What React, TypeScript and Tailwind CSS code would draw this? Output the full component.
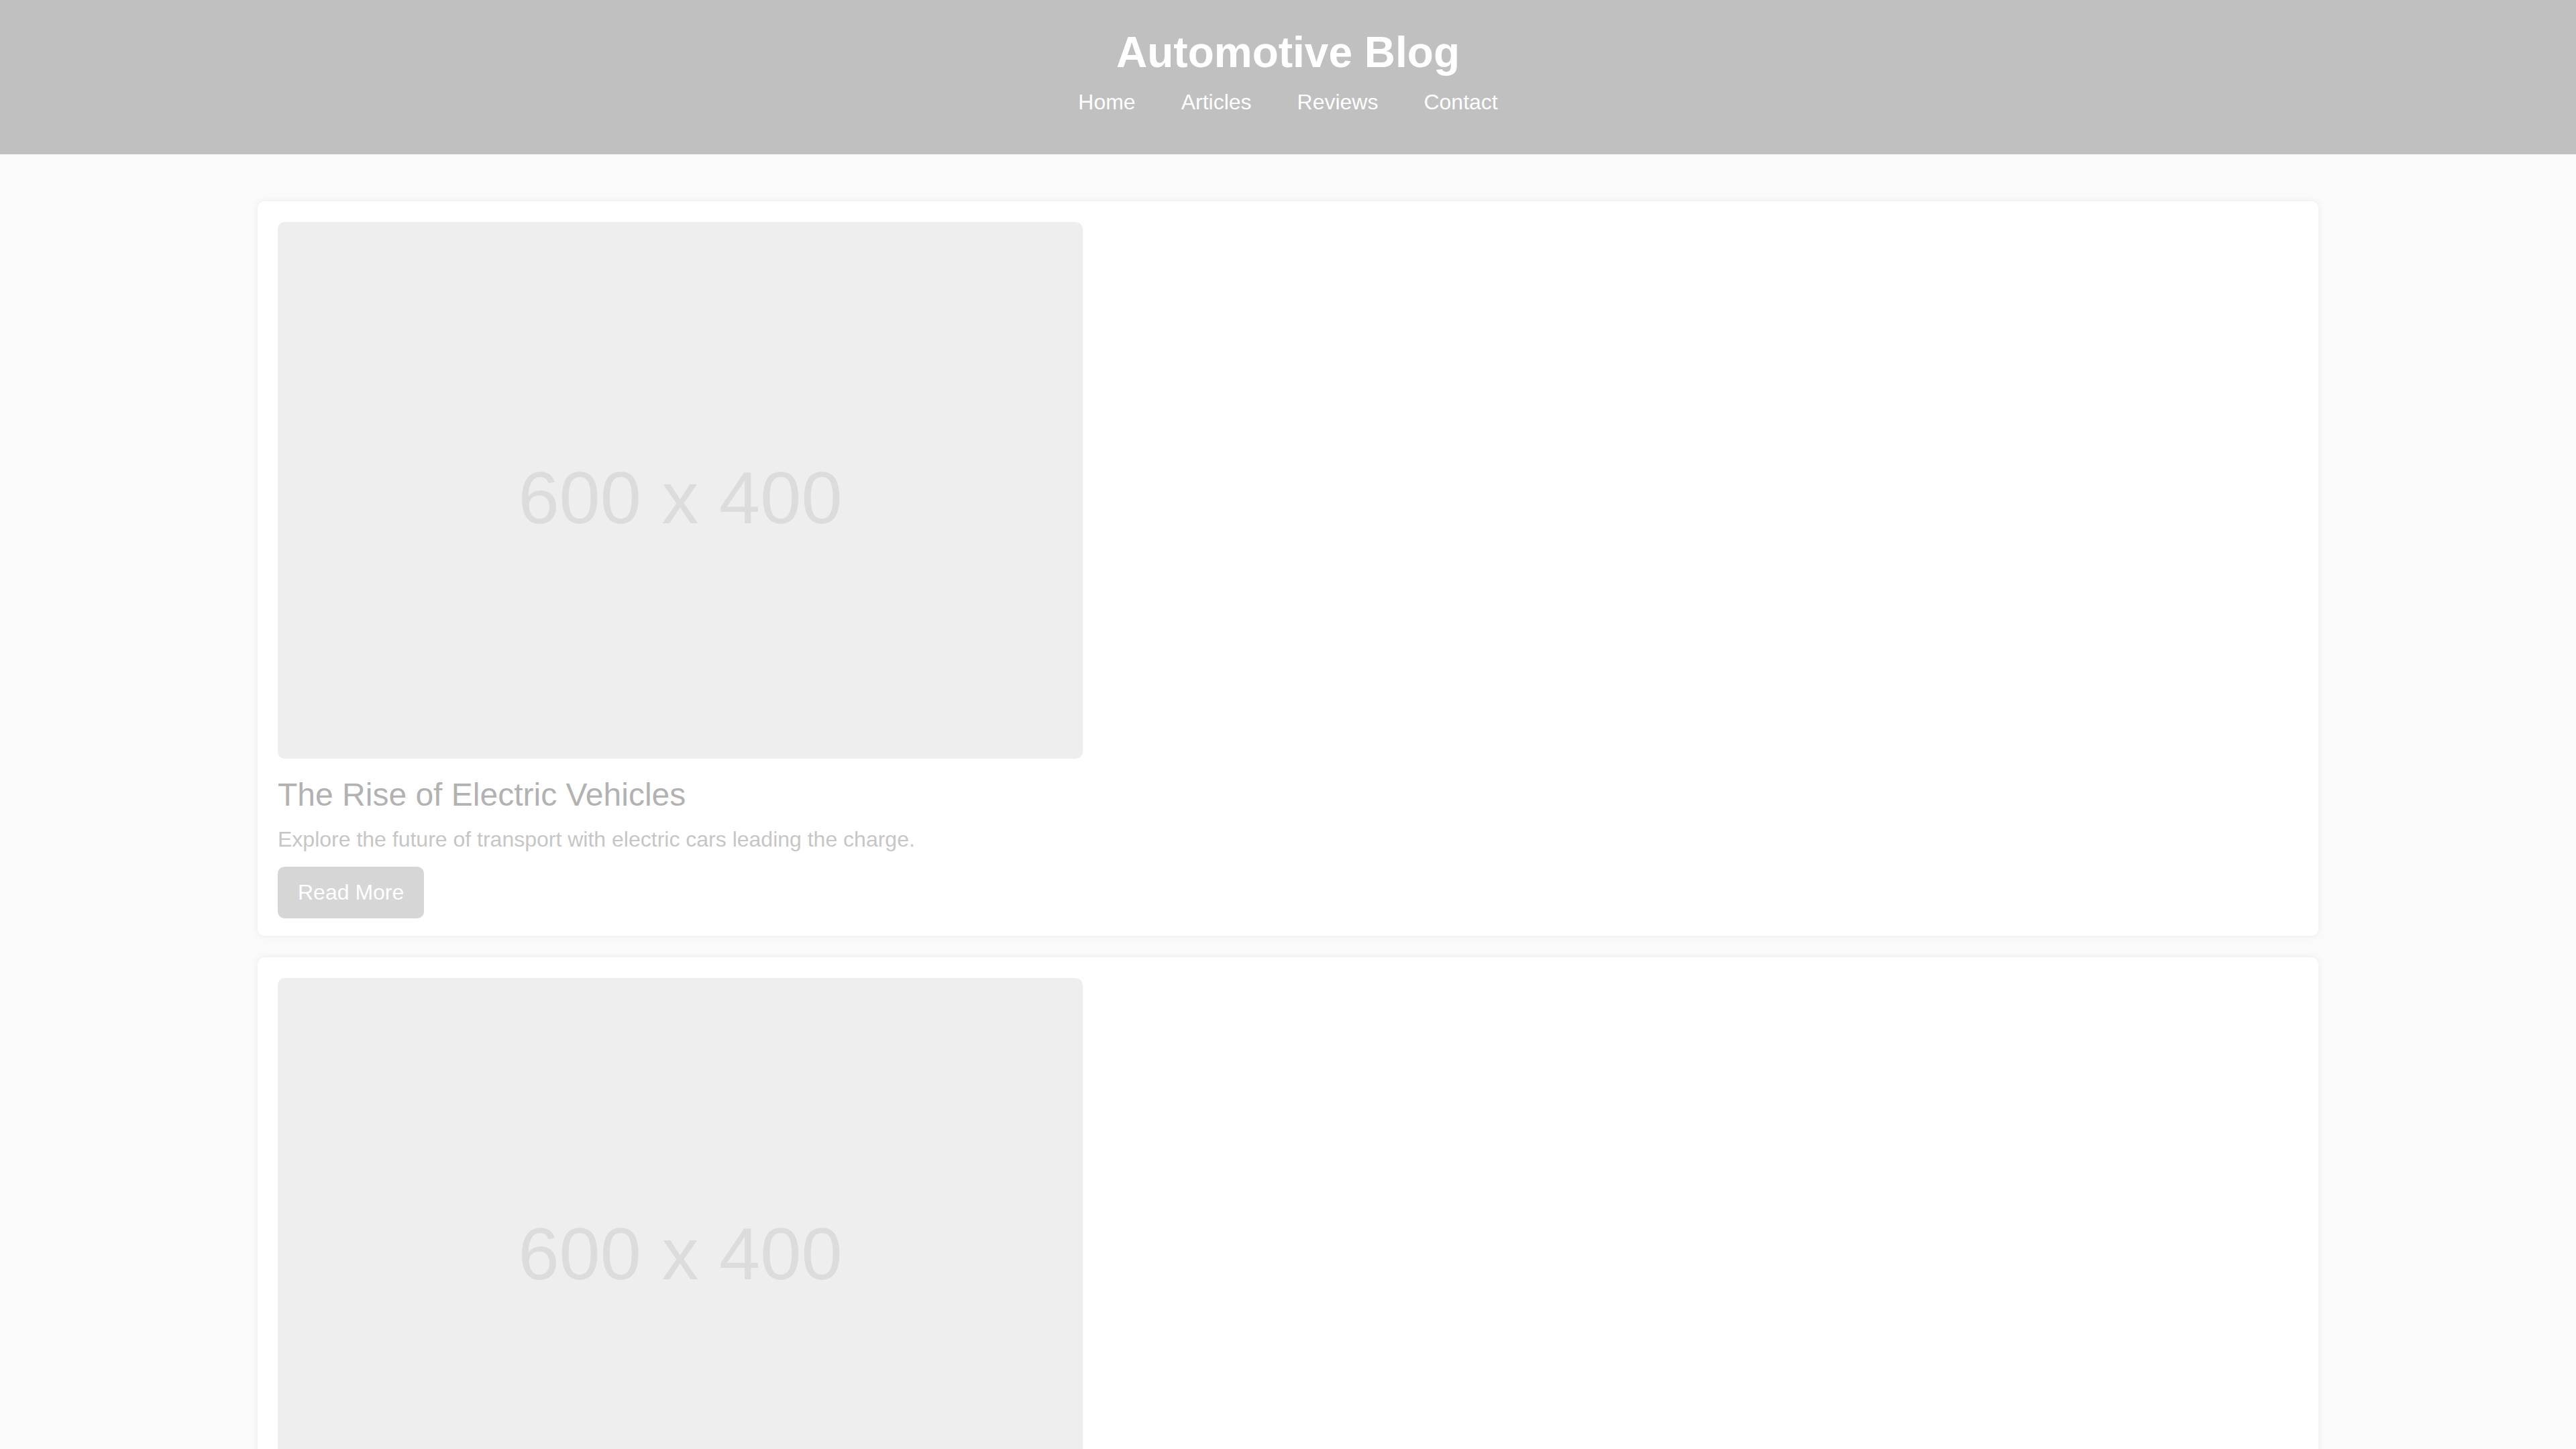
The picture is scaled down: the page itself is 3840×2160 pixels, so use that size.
import React from 'react';

interface Post {
  id: number;
  title: string;
  excerpt: string;
}

const posts: Post[] = [
  {
    id: 1,
    title: 'The Rise of Electric Vehicles',
    excerpt: 'Explore the future of transport with electric cars leading the charge.',
  },
  {
    id: 2,
    title: 'Top 10 Sports Cars of the Year',
    excerpt: 'A look at the fastest and most exciting cars on the road today.',
  },
];

const navLinks = ['Home', 'Articles', 'Reviews', 'Contact'];

const PostCard = ({ post }: { post: Post }) => (
  <article className="bg-white rounded-[10px] shadow-[0_0_10px_rgba(0,0,0,0.07)] px-[30px] pt-[31px] pb-[26px]">
    {/* placeholder thumbnail */}
    <div className="w-[1200px] h-[800px] rounded-[10px] bg-[#eeeeee] flex items-center justify-center">
      <span className="mt-[22px] text-[110px] leading-[1.15] text-[#dcdcdc]">600 x 400</span>
    </div>
    <h2 className="mt-[26px] text-[48px] leading-[1.15] font-normal text-[#b2b2b2]">{post.title}</h2>
    <p className="mt-[21px] text-[32px] leading-[1.15] text-[#c6c6c6]">{post.excerpt}</p>
    <button className="mt-[22px] px-[30px] py-[20px] rounded-[10px] bg-[#d6d6d6] text-white text-[32px] leading-[1.15]">
      Read More
    </button>
  </article>
);

const App: React.FC = () => {
  return (
    <div className="min-h-screen bg-[#fafafa] font-['Liberation_Sans',Arial,sans-serif]">
      <header className="h-[230px] bg-[#c0c0c0] pt-[42px] flex flex-col items-center">
        <h1 className="text-[64px] leading-[1.15] font-bold text-white">Automotive Blog</h1>
        <nav className="mt-[18px] flex gap-[68px]">
          {navLinks.map((link) => (
            <a key={link} href="#" className="text-[32px] leading-[1.15] text-white">
              {link}
            </a>
          ))}
        </nav>
      </header>

      <main className="w-[3072px] mx-auto pt-[70px] pb-[40px] flex flex-col gap-[32px]">
        {posts.map((post) => (
          <PostCard key={post.id} post={post} />
        ))}
      </main>
    </div>
  );
};

export default App;
